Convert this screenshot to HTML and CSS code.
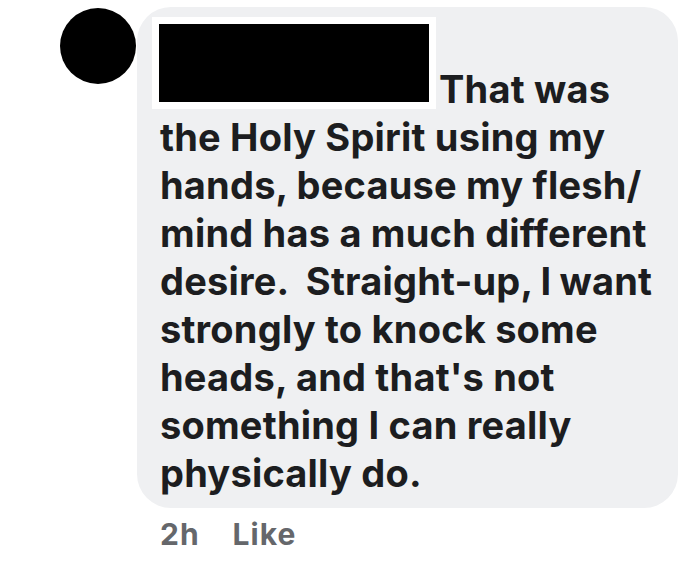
FILE: index.html
```html
<!DOCTYPE html>
<html lang="en">
<head>
    <meta charset="UTF-8">
    <meta name="viewport" content="width=device-width, initial-scale=1.0">
    <title>Comment</title>
    <link rel="stylesheet" href="styles.css">
</head>
<body>
    <div class="comment">
        <div class="avatar"></div>
        <div class="body">
            <div class="bubble">
                <p class="text"><span class="redacted"></span>That was<br>the Holy Spirit using my<br>hands, because my flesh/<br>mind has a much different<br><span class="tight">desire.&nbsp; Straight-up, I want</span><br>strongly to knock some<br>heads, and that's not<br>something I can really<br>physically do.</p>
            </div>
            <div class="meta">
                <span>2h</span>
                <span>Like</span>
            </div>
        </div>
    </div>
</body>
</html>
```

FILE: styles.css
```css
body, html {
    margin: 0;
    padding: 0;
    background: #ffffff;
    font-family: 'Inter', 'Roboto', sans-serif;
}
.comment {
    display: flex;
    align-items: flex-start;
    padding: 7px 0 0 60px;
}
.avatar {
    width: 76px;
    height: 76px;
    margin-top: 1px;
    border-radius: 50%;
    background: #000000;
    flex-shrink: 0;
}
.body {
    margin-left: 1px;
}
.bubble {
    width: 541px;
    box-sizing: border-box;
    background: #eff0f2;
    border-radius: 34px;
    padding: 10px 0 11px 23px;
}
.text {
    margin: 0;
    font-size: 38px;
    font-weight: 700;
    line-height: 48px;
    letter-spacing: 0.2px;
    color: #1c1d20;
    white-space: nowrap;
}
.tight {
    word-spacing: -1px;
}
.redacted {
    display: inline-block;
    width: 270px;
    height: 78px;
    border: 7px solid #ffffff;
    background: #000000;
    margin-left: -8px;
    margin-right: 3px;
    vertical-align: -6px;
}
.meta {
    display: flex;
    gap: 33px;
    padding: 8px 0 0 23px;
    font-size: 30px;
    font-weight: 700;
    letter-spacing: 1px;
    color: #65676b;
}
```
